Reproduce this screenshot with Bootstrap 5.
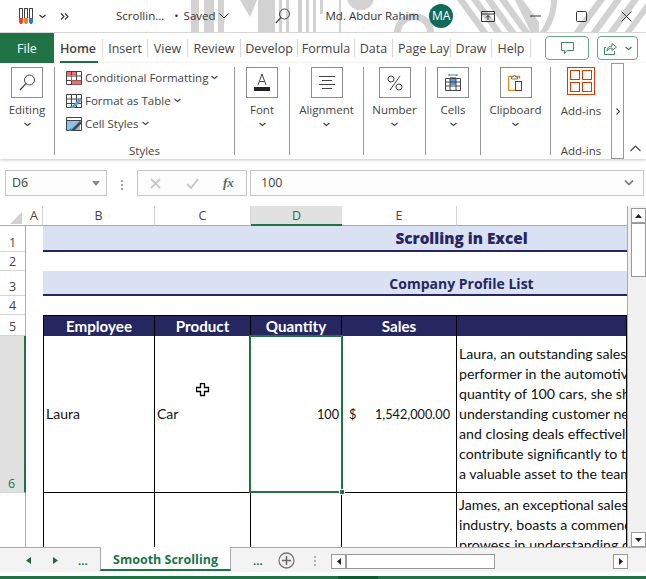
<!doctype html>
<html lang="en"><head><meta charset="utf-8"><title>Scrolling in Excel</title>
<link rel="stylesheet" href="https://cdn.jsdelivr.net/npm/bootstrap@5.3.0/dist/css/bootstrap.min.css">
<style>
html,body{margin:0;width:646px;height:579px;overflow:hidden;background:#fff}
body{font-family:"Open Sans","Noto Sans",sans-serif;font-size:11.5px;color:#444;line-height:16px}
svg{display:block;flex:none}
.xl{width:646px;height:579px}
/* title */
.ttl{height:33px;border-bottom:1px solid #d6d6d6;overflow:hidden}
.ttl-bg{position:absolute;left:0;top:0}
.ttl-in{height:32px;position:relative;font-size:11.5px;color:#333}
.m19{margin-left:19px}.m5{margin-left:5px}.m14{margin-left:14px}.m47{margin-left:47px}.m3{margin-left:3px}.m46{margin-left:46px}.m35{margin-left:35px}.m10{margin-left:10px}.m28{margin-left:28px}.m34b{margin-left:35px}.m34c{margin-left:34px}
.avat{width:24px;height:24px;border-radius:50%;background:#0f6b5c;color:#fff;font-size:12px}
/* tabs */
.tabs{height:30px}
.filetab{width:54px;height:30px;background:#217346;color:#fff;font-size:12.5px;padding-top:1px}
.tb{height:18px;border-right:1px solid #d8d8d8;overflow:hidden;white-space:nowrap;position:relative;font-size:12.5px;color:#444;padding-top:1px}
.t49{width:49px;overflow:visible;font-weight:600;color:#444}.t45{width:45px}.t40{width:40px}.t52{width:53px}.t57{width:57px}.t38{width:38px}.t58{width:58px;padding-left:5px;justify-content:flex-start!important}.t41{width:41px}.t39{width:39px}
.t49::after{content:"";position:absolute;left:6px;top:22px;width:38px;height:2px;background:#217346}
.cmt{width:44px;height:24px;border:1px solid #69a883;border-radius:4px;margin-left:14px}
.shr{width:41px;height:24px;border:1px solid #69a883;border-radius:4px;margin-left:8px}
/* ribbon */
.rib{height:96px;box-shadow:0 1px 3px rgba(0,0,0,.22);position:relative;background:#fff;border-top:1px solid #fff}
.grp{height:88px;margin-top:3px;border-right:1px solid #999;position:relative;flex:none;font-size:11.5px;color:#444;padding-top:0}
.g54{width:55px}.g179{width:180px;padding-left:11px}.g55{width:55px}.g74{width:74px}.g62{width:62px}.g54b{width:55px}.g70{width:70px}.g60{width:60px;border-right:0}
.bx{width:32px;height:31px;border:1px solid #8c8c8c}
.lbl{margin-top:4px;white-space:nowrap}
.chv{margin-top:4px}
.sty{height:23px;white-space:nowrap;position:relative;top:-1px}
.sty svg:first-child{margin-right:3px}
.sty .cd{margin-left:3px}
.gcap{position:absolute;left:0;right:0;bottom:-4px;text-align:center}
.more{width:13px;height:96px;border:1px solid #999;margin-top:-1px;flex:none}
.coll{flex:1;height:92px;padding-bottom:4px}
/* formula */
.fbar{height:47px;padding:11px 0 0 5px;background:#fff}
.fbox{height:26px;border:1px solid #c6c6c6;background:#fdfdfd;font-size:12.5px}
.nm{width:102px;padding:0 6px}.ddots{width:30px}.fxb{width:110px}.fm{width:394px;margin-left:3px;padding:0 9px 0 10px}
.grip{width:2px;height:2px;background:#a8a8a8;box-shadow:0 4px 0 #a8a8a8,0 8px 0 #a8a8a8;margin-top:-8px}
.fx{font-family:"Liberation Serif",serif;font-style:italic;font-weight:700;color:#666;font-size:13px}
/* sheet */
.sheetw{height:341px}
.sheet{display:grid;width:628px;height:341px;overflow:hidden;position:relative;flex:none;border-right:1px solid #aaa;
 grid-template-columns:26px 17px 112px 96px 91px 115px 170px;grid-template-rows:20px 26px 19px 25px 19px 21px 157px 160px;
 font-family:Lato,"Open Sans",sans-serif;font-size:14px;color:#111}
.ch{border-bottom:1px solid #aaa;border-right:1px solid #d4d4d4;text-align:center;font:12.5px/19px "Open Sans",sans-serif;color:#444}
.ch.cur{background:#e1e1e1;border-bottom:2px solid #217346;color:#217346;border-right:0}
.ch.noln{border-right:0}
.corn{border-right:0;position:relative}
.rh{border-right:1px solid #aaa;border-bottom:1px solid #d4d4d4;font:12.5px/16px "Open Sans",sans-serif;color:#444;text-align:center;display:flex;align-items:flex-end;justify-content:center}
.rh.cur{background:#e1e1e1;border-right:2px solid #217346;color:#217346;padding-right:1px}
.colband{grid-column:3 / 8}
.band{background:#d9e1f2;border-bottom:2px solid #262660;color:#262660;font-weight:800;text-align:center;padding-left:253px;padding-top:1px;white-space:nowrap;overflow:hidden;font-family:"Open Sans",sans-serif}
.b1{font-size:15.3px;line-height:23px}.b2{font-size:14px;line-height:23px;font-weight:700}
.hd{background:#262660;color:#fff;font-weight:700;font-size:15.2px;text-align:center;border-top:1px solid #000;border-right:1px solid #000;line-height:21px;overflow:hidden}
.hd.fst{border-left:1px solid #000}
.bd{border-right:1px solid #000;border-bottom:1px solid #000;background:#fff;overflow:hidden;white-space:nowrap;padding:0 2px}
.bd.fst{border-left:1px solid #000;padding-left:2px}
.lns{line-height:20px;padding-top:8px;font-size:14.2px}
.lns2{padding-top:2px}
.acct{padding:0 6px 0 7px}
.numv{font-size:12.7px}
.sel{position:absolute;left:249px;top:129px;width:94px;height:158px;border:2px solid #217346;pointer-events:none}
.sel::after{content:"";position:absolute;right:-4px;bottom:-4px;width:6px;height:6px;background:#217346;border:1px solid #fff}
.curs{position:absolute;left:196px;top:177px}
.cell-v{display:flex;align-items:center;height:100%}
/* scrollbars */
.vsb{flex:1;background:#f1f1f1;padding:2px 0 0 3px;height:341px;position:relative}
.sbb{width:15px;height:15px;border:1px solid #999;background:#fff}
.vth{width:15px;height:54px;border:1px solid #999;background:#fff;margin-top:0}
.spc{flex:1}
/* bottom */
.btm{height:29px;background:#f3f3f3;border-top:1px solid #aaa;position:relative;flex:none}
.strip{height:23px;padding-top:2px}
.tnav{width:100px;height:21px;color:#217346;font-weight:700}
.tnv1{margin-left:26px}.tnv2{margin-left:22px}.tdot{margin-left:20px;font-family:"Liberation Sans",sans-serif}
.sheettab{width:131px;height:24px;background:#fff;border-left:1px solid #aaa;border-right:1px solid #aaa;border-bottom:2px solid #217346;color:#217346;font-weight:700;font-size:12.5px;text-align:center;line-height:25px;font-family:"Open Sans",sans-serif;margin-top:-3px;flex:none}
.dt2{margin-left:22px;font-weight:700;color:#217346;font-family:"Liberation Sans",sans-serif;width:10px}
.plus{margin-left:15px}
.hgrip{margin-left:19px;margin-top:6px;background:#b0b0b0;box-shadow:0 4px 0 #b0b0b0,0 8px 0 #b0b0b0;width:2px;height:2px;align-self:flex-start}
.hsb{margin-left:15px;height:15px;width:297px;margin-top:4px;align-self:flex-start}
.hth{width:149px;height:15px;border:1px solid #999;background:#fff}
.lw{height:5px;background:#fff;margin-top:1px}
.stat{height:3px;background:#217346;position:relative;flex:none}
.stat::after{content:"";position:absolute;left:338px;top:0;width:40px;height:3px;background:#0e5c2f}
</style></head><body>
<div class="xl d-flex flex-column">
 <div class="ttl position-relative">
  <svg class="ttl-bg" width="646" height="33" viewBox="0 0 646 33" fill="#d2d2d2">
   <path d="M191 0h8v33h-8zM204 0h10v33h-10zM218 0h6v33h-6zM240 0h17l-7 17z"/>
   <path d="M258 0h17v33h-17zM279 0h3v33h-3zM286 0h3v33h-3zM298 0h4v33h-4zM306 0h3v33h-3zM313 0h3v33h-3zM320 0h3v14h-3zM339 0h2v33h-2z"/>
   <path d="M347 0h27a14 14 0 0 1-27 0z"/>
   <path d="M394 33a20 20 0 0 1 40-0h-7a13 13 0 0 0-26 0z"/>
   <path d="M457 0h8l24 33h-8zM471 0h8l24 33h-8zM485 0h8l24 33h-8zM499 0h8l24 33h-8zM515 0h8l16 22v11h-8z"/>
   <path d="M539 33c8-10 12-22 12-33h6c0 12-4 24-11 33z"/>
   <path d="M573 33l24-33h8l-24 33zM590 33l24-33h8l-24 33zM607 33l24-33h8l-24 33zM624 33l22-30v10l-15 20z"/>
  </svg>
  <div class="ttl-in d-flex align-items-center">
   <svg class="m19" width="15" height="17" viewBox="0 0 15 17"><g fill="none" stroke="#444"><rect x=".5" y=".5" width="3" height="10"/><rect x="5.500" y=".5" width="3" height="10"/><rect x="10.500" y=".5" width="3" height="10"/></g><path d="M0 10h4v4l-1 2H1l-1-2z" fill="#e8403a"/><path d="M5 10h4v4l-1 2H6l-1-2z" fill="#e88a1a"/><path d="M10 10h4v4l-1 2h-2l-1-2z" fill="#2a7bc8"/></svg>
   <svg class="m5" width="7" height="5" viewBox="0 0 7 5"><path d="M.5 1l3 2.500L6.500 1" fill="none" stroke="#333" stroke-width="1.200"/></svg>
   <svg class="m14" width="9" height="7" viewBox="0 0 9 7"><path d="M1 .5l3 3-3 3M5 .5l3 3-3 3" fill="none" stroke="#333" stroke-width="1.100"/></svg>
   <span class="m47">Scrollin...</span>
   <span class="m10">•</span>
   <span class="m5">Saved</span>
   <svg class="m3" width="10" height="6" viewBox="0 0 10 6"><path d="M.5.500l4.500 4.500 4.500-4.500" fill="none" stroke="#333"/></svg>
   <svg class="m46" width="16" height="16" viewBox="0 0 16 16"><circle cx="9.500" cy="6" r="5" fill="none" stroke="#444"/><path d="M6 9.500L.8 15" stroke="#444" stroke-width="1.200"/></svg>
   <span class="m35">Md. Abdur Rahim</span>
   <span class="avat m10 d-flex align-items-center justify-content-center">MA</span>
   <svg class="m28" width="14" height="11" viewBox="0 0 14 11"><path d="M.5.500h13v10H.5zM.5 3h13" fill="none" stroke="#333"/><path d="M7 9V4.500M5 6.500l2-2 2 2" fill="none" stroke="#333"/></svg>
   <svg class="m34b" width="11" height="2" viewBox="0 0 11 2"><path d="M0 1h11" stroke="#333"/></svg>
   <svg class="m34b" width="11" height="11" viewBox="0 0 11 11"><rect x=".5" y=".5" width="10" height="10" rx="1" fill="none" stroke="#333"/></svg>
   <svg class="m34c" width="11" height="11" viewBox="0 0 11 11"><path d="M.5.500l10 10M10.500.500l-10 10" stroke="#333"/></svg>
  </div>
 </div>
 <div class="tabs d-flex align-items-center">
  <div class="filetab d-flex align-items-center justify-content-center">File</div>
  <div class="tb t49 d-flex align-items-center justify-content-center">Home</div>
  <div class="tb t45 d-flex align-items-center justify-content-center">Insert</div>
  <div class="tb t40 d-flex align-items-center justify-content-center">View</div>
  <div class="tb t52 d-flex align-items-center justify-content-center">Review</div>
  <div class="tb t57 d-flex align-items-center justify-content-center">Develop</div>
  <div class="tb t57 d-flex align-items-center justify-content-center">Formula</div>
  <div class="tb t38 d-flex align-items-center justify-content-center">Data</div>
  <div class="tb t58 d-flex align-items-center justify-content-center">Page Layout</div>
  <div class="tb t41 d-flex align-items-center justify-content-center">Draw</div>
  <div class="tb t39 d-flex align-items-center justify-content-center">Help</div>
  <div class="cmt d-flex align-items-center justify-content-center"><svg width="13" height="13" viewBox="0 0 13 13"><path d="M.5.500h12v8H6l-2.500 3v-3h-3z" fill="none" stroke="#3d8a5f"/></svg></div>
  <div class="shr d-flex align-items-center justify-content-center gap-2"><svg width="13" height="13" viewBox="0 0 13 13"><path d="M2 5.500H.5v7h10V9M3 9c0-3 2-5 5-5V1.500l4.500 3.500L8 8.500V6C6 6 4 7 3 9z" fill="none" stroke="#3d8a5f"/></svg><svg width="7" height="5" viewBox="0 0 7 5"><path d="M.5 1l3 2.500 3-2.500" fill="none" stroke="#3d8a5f" stroke-width="1.300"/></svg></div>
 </div>
 <div class="rib d-flex">
  <div class="grp g54 d-flex flex-column align-items-center">
   <div class="bx d-flex align-items-center justify-content-center"><svg width="17" height="17" viewBox="0 0 17 17"><circle cx="10.500" cy="6" r="5" fill="none" stroke="#444"/><path d="M7 9.500L1 16" stroke="#444" stroke-width="1.200"/></svg></div>
   <div class="lbl">Editing</div>
   <svg class="chv" width="7" height="5" viewBox="0 0 7 5"><path d="M.5 1l3 2.500 3-2.500" fill="none" stroke="#444" stroke-width="1.200"/></svg>
  </div>
  <div class="grp g179">
   <div class="sty d-flex align-items-center"><svg width="16" height="14" viewBox="0 0 16 14"><path d="M.5.500h15v13H.5zM5.500.500v13M10.500.500v13M.5 5h15M.5 9.500h15" fill="none" stroke="#444"/><path d="M1 1h4v4H1zM6 9.500h9v4H6z" fill="#ef6f6f"/><path d="M6 1h4v4H6z" fill="#ef6f6f"/><path d="M5 4h1v6H5z" fill="#2f86d0"/></svg>Conditional Formatting<svg class="cd" width="7" height="5" viewBox="0 0 7 5"><path d="M.5 1l3 2.500 3-2.500" fill="none" stroke="#444" stroke-width="1.100"/></svg></div>
   <div class="sty d-flex align-items-center"><svg width="16" height="14" viewBox="0 0 16 14"><path d="M.5.500h15v13H.5zM5.500.500v13M10.500.500v13M.5 5h15M.5 9.500h15" fill="none" stroke="#444"/><path d="M5 13l9-9 2 2-8 8H5z" fill="#5b9bd5"/><path d="M3 14l2-2 1 1-1 1z" fill="#2f6ea6"/></svg>Format as Table<svg class="cd" width="7" height="5" viewBox="0 0 7 5"><path d="M.5 1l3 2.500 3-2.500" fill="none" stroke="#444" stroke-width="1.100"/></svg></div>
   <div class="sty d-flex align-items-center"><svg width="16" height="14" viewBox="0 0 16 14"><path d="M.5.500h15v13H.5zM.5 3.500h15" fill="none" stroke="#444"/><path d="M1 4h13v9H1z" fill="#8dbfe8"/><path d="M5 13l9-9 2 2-8 8H5z" fill="#4a4a4a"/><path d="M2 14l3-3 1 2-1 1z" fill="#2f86d0"/></svg>Cell Styles<svg class="cd" width="7" height="5" viewBox="0 0 7 5"><path d="M.5 1l3 2.500 3-2.500" fill="none" stroke="#444" stroke-width="1.100"/></svg></div>
   <div class="gcap">Styles</div>
  </div>
  <div class="grp g55 d-flex flex-column align-items-center">
   <div class="bx d-flex align-items-center justify-content-center"><svg width="16" height="19" viewBox="0 0 16 19"><path d="M4 12L8 1l4 11M5.500 8.500h5" fill="none" stroke="#444"/><path d="M0 14h16v4H0z" fill="#222"/></svg></div>
   <div class="lbl">Font</div>
   <svg class="chv" width="7" height="5" viewBox="0 0 7 5"><path d="M.5 1l3 2.500 3-2.500" fill="none" stroke="#444" stroke-width="1.200"/></svg>
  </div>
  <div class="grp g74 d-flex flex-column align-items-center">
   <div class="bx d-flex align-items-center justify-content-center"><svg width="16" height="14" viewBox="0 0 16 14"><path d="M0 .5h16M3 4.500h10M0 8.500h16M3 12.500h10" stroke="#444"/></svg></div>
   <div class="lbl">Alignment</div>
   <svg class="chv" width="7" height="5" viewBox="0 0 7 5"><path d="M.5 1l3 2.500 3-2.500" fill="none" stroke="#444" stroke-width="1.200"/></svg>
  </div>
  <div class="grp g62 d-flex flex-column align-items-center">
   <div class="bx d-flex align-items-center justify-content-center"><svg width="16" height="16" viewBox="0 0 16 16"><circle cx="4" cy="4" r="3" fill="none" stroke="#444"/><circle cx="12" cy="12" r="3" fill="none" stroke="#444"/><path d="M13 1L3 15" stroke="#444"/></svg></div>
   <div class="lbl">Number</div>
   <svg class="chv" width="7" height="5" viewBox="0 0 7 5"><path d="M.5 1l3 2.500 3-2.500" fill="none" stroke="#444" stroke-width="1.200"/></svg>
  </div>
  <div class="grp g54b d-flex flex-column align-items-center">
   <div class="bx d-flex align-items-center justify-content-center"><svg width="16" height="17" viewBox="0 0 16 17"><path d="M4 1h8M4 0v2M12 0v2" stroke="#2f86d0"/><path d="M5 3h6v8H5z" fill="#5b9bd5"/><path d="M.5 4.500h15v12H.5zM.5 8h15M.5 12h15M5 4.500v12M11 4.500v12" fill="none" stroke="#444"/></svg></div>
   <div class="lbl">Cells</div>
   <svg class="chv" width="7" height="5" viewBox="0 0 7 5"><path d="M.5 1l3 2.500 3-2.500" fill="none" stroke="#444" stroke-width="1.200"/></svg>
  </div>
  <div class="grp g70 d-flex flex-column align-items-center">
   <div class="bx d-flex align-items-center justify-content-center"><svg width="16" height="17" viewBox="0 0 16 17"><path d="M.5 2.500h11v2M.5 2.500v14h7" fill="none" stroke="#e0851a" stroke-width="1.300"/><path d="M3.500 5V3h1.500a1.500 1.500 0 0 1 3 0h1.500v2z" fill="#fff" stroke="#777"/><rect x="7.500" y="7.500" width="6" height="9" fill="#fff" stroke="#444"/></svg></div>
   <div class="lbl">Clipboard</div>
   <svg class="chv" width="7" height="5" viewBox="0 0 7 5"><path d="M.5 1l3 2.500 3-2.500" fill="none" stroke="#444" stroke-width="1.200"/></svg>
  </div>
  <div class="grp g60 d-flex flex-column align-items-center">
   <svg width="28" height="28" viewBox="0 0 28 28"><g fill="none" stroke="#d83b01"><rect x=".5" y=".5" width="27" height="27"/><rect x="3.500" y="3.500" width="9" height="9"/><rect x="15.500" y="3.500" width="9" height="9"/><rect x="3.500" y="15.500" width="9" height="9"/><rect x="15.500" y="15.500" width="9" height="9"/></g></svg>
   <div class="lbl mt-2">Add-ins</div>
   <div class="gcap">Add-ins</div>
  </div>
  <div class="more d-flex align-items-center justify-content-center"><svg width="4" height="7" viewBox="0 0 4 7"><path d="M.5.500l3 3-3 3" fill="none" stroke="#444" stroke-width="1.100"/></svg></div>
  <div class="coll d-flex align-items-end justify-content-center"><svg width="11" height="7" viewBox="0 0 11 7"><path d="M.5 6l5-5 5 5" fill="none" stroke="#444" stroke-width="1.100"/></svg></div>
 </div>
 <div class="fbar d-flex align-items-start">
  <div class="fbox nm d-flex align-items-center justify-content-between">D6<svg width="8" height="5" viewBox="0 0 8 5"><path d="M0 0h8L4 5z" fill="#888"/></svg></div>
  <div class="ddots d-flex justify-content-center align-self-center"><div class="grip"></div></div>
  <div class="fbox fxb d-flex align-items-center justify-content-around">
   <svg width="11" height="11" viewBox="0 0 11 11"><path d="M1 1l9 9M10 1l-9 9" stroke="#c8c8c8" stroke-width="1.800"/></svg>
   <svg width="13" height="11" viewBox="0 0 13 11"><path d="M1 6l4 4 7-9" fill="none" stroke="#c8c8c8" stroke-width="2"/></svg>
   <span class="fx">fx</span>
  </div>
  <div class="fbox fm d-flex align-items-center justify-content-between">100<svg width="10" height="6" viewBox="0 0 10 6"><path d="M1 .5l4 4 4-4" fill="none" stroke="#777" stroke-width="1.700"/></svg></div>
 </div>
 <div class="sheetw d-flex">
  <div class="sheet">
   <div class="ch corn"><svg class="mt-1" width="24" height="16" viewBox="0 0 24 16"><path d="M22 2v12H10z" fill="#d2d2d2"/></svg></div>
   <div class="ch">A</div><div class="ch">B</div><div class="ch">C</div><div class="ch cur">D</div><div class="ch">E</div><div class="ch noln"></div>

   <div class="rh">1</div><div></div><div class="band b1 colband">Scrolling in Excel</div>
   <div class="rh">2</div><div></div><div class="colband"></div>
   <div class="rh">3</div><div></div><div class="band b2 colband">Company Profile List</div>
   <div class="rh">4</div><div></div><div class="colband"></div>

   <div class="rh">5</div><div></div>
   <div class="hd fst">Employee</div><div class="hd">Product</div><div class="hd">Quantity</div><div class="hd">Sales</div><div class="hd"></div>

   <div class="rh cur">6</div><div></div>
   <div class="bd fst"><div class="cell-v">Laura</div></div>
   <div class="bd"><div class="cell-v">Car</div></div>
   <div class="bd numv"><div class="cell-v justify-content-end">100</div></div>
   <div class="bd acct numv"><div class="cell-v justify-content-between"><span>$</span><span>1,542,000.00</span></div></div>
   <div class="bd lns"><div>Laura, an outstanding sales</div><div>performer in the automotive</div><div>quantity of 100 cars, she showcases</div><div>understanding customer needs</div><div>and closing deals effectively</div><div>contribute significantly to the</div><div>a valuable asset to the team</div></div>

   <div class="rh"></div><div></div>
   <div class="bd fst"></div><div class="bd"></div><div class="bd"></div><div class="bd"></div>
   <div class="bd lns lns2"><div>James, an exceptional sales</div><div>industry, boasts a commendable</div><div>prowess in understanding client</div></div>

   <div class="sel"></div>
   <svg class="curs" width="14" height="14" viewBox="0 0 14 14"><path d="M4.500.500h4v4h4v4h-4v4h-4v-4h-4v-4h4z" fill="#fff" stroke="#000" stroke-width="1.300"/></svg>
  </div>
  <div class="vsb d-flex flex-column">
   <div class="sbb d-flex align-items-center justify-content-center"><svg width="7" height="4" viewBox="0 0 7 4"><path d="M3.500 0l3.500 4H0z" fill="#222"/></svg></div>
   <div class="vth"></div>
   <div class="spc"></div>
   <div class="sbb d-flex align-items-center justify-content-center"><svg width="7" height="4" viewBox="0 0 7 4"><path d="M0 0h7L3.500 4z" fill="#222"/></svg></div>
  </div>
 </div>
 <div class="btm">
  <div class="strip d-flex align-items-center">
   <div class="tnav d-flex align-items-center">
    <svg class="tnv1" width="5" height="7" viewBox="0 0 5 7"><path d="M5 0v7L0 3.500z" fill="#1b6b3f"/></svg>
    <svg class="tnv2" width="5" height="7" viewBox="0 0 5 7" ><path d="M0 0v7l5-3.500z" fill="#1b6b3f"/></svg>
    <span class="tdot">...</span>
   </div>
   <div class="sheettab">Smooth Scrolling</div>
   <span class="dt2">...</span>
   <svg class="plus" width="17" height="17" viewBox="0 0 17 17"><circle cx="8.500" cy="8.500" r="7.500" fill="none" stroke="#777" stroke-width="1.300"/><path d="M8.500 4v9M4 8.500h9" stroke="#666" stroke-width="1.500"/></svg>
   <div class="hgrip"></div>
   <div class="hsb d-flex">
    <div class="sbb d-flex align-items-center justify-content-center"><svg width="4" height="7" viewBox="0 0 4 7"><path d="M4 0v7L0 3.500z" fill="#222"/></svg></div>
    <div class="hth"></div>
    <div class="spc"></div>
    <div class="sbb d-flex align-items-center justify-content-center"><svg width="4" height="7" viewBox="0 0 4 7"><path d="M0 0v7l4-3.500z" fill="#222"/></svg></div>
   </div>
  </div>
  <div class="lw"></div>
 </div>
 <div class="stat"></div>
</div>
<script src="https://cdn.jsdelivr.net/npm/bootstrap@5.3.0/dist/js/bootstrap.bundle.min.js"></script>
</body></html>
